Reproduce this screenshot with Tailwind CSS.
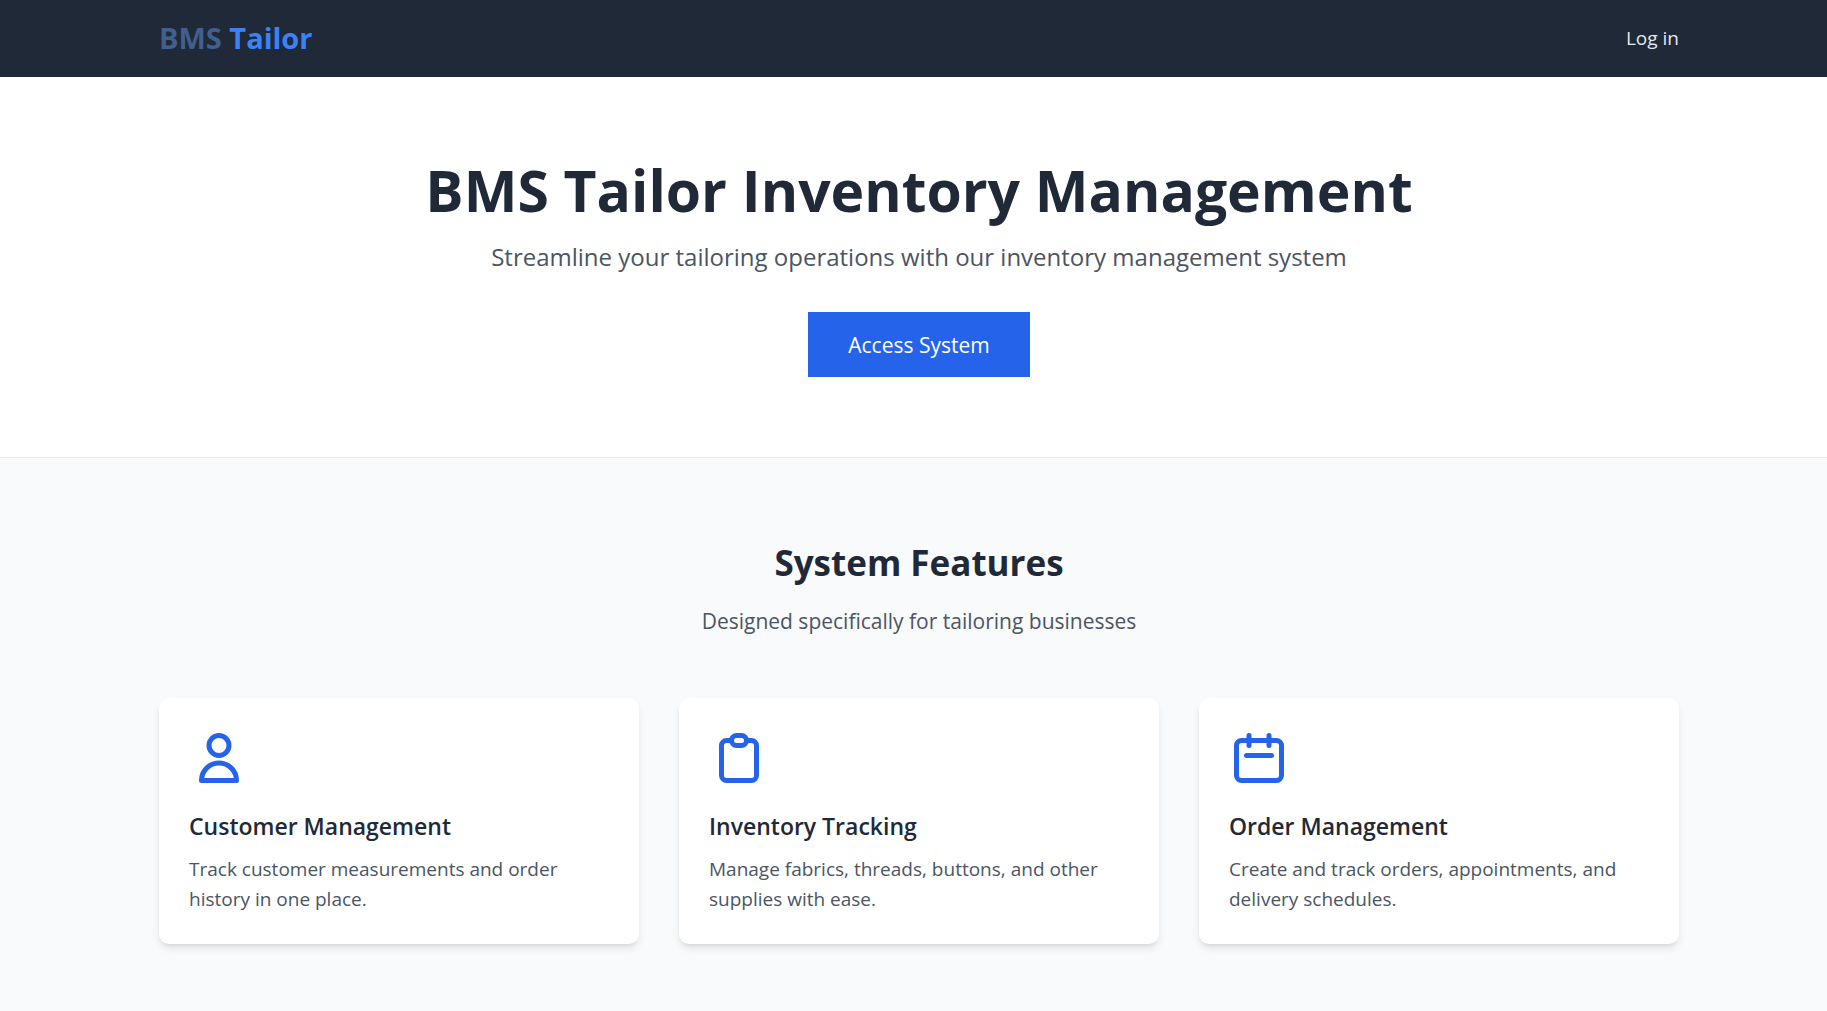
<!DOCTYPE html>
<html lang="en">
<head>
<meta charset="utf-8">
<meta name="viewport" content="width=device-width, initial-scale=1">
<title>BMS Tailor</title>
<script src="https://cdn.jsdelivr.net/npm/@tailwindcss/browser@4"></script>
</head>
<body class="min-h-screen bg-[#f9fafb] font-['Open_Sans','Noto_Sans',sans-serif] text-[#1f2937]">
  <header class="bg-[#1f2937] pl-[11px]">
    <nav class="mx-auto flex h-[77px] max-w-[1600px] items-center justify-between px-10">
      <a href="#" class="pb-0.5 text-[29px] font-bold text-[#3b82f6]"><span class="text-[#415f8f]">BMS</span> Tailor</a>
      <a href="#" class="text-[19px] text-[#e5e7eb]">Log in</a>
    </nav>
  </header>

  <main>
    <section class="border-b border-[#e5e7eb] bg-white pl-[11px]">
      <div class="mx-auto flex max-w-[1600px] flex-col items-center px-10 py-20 text-center">
        <h1 class="text-[57px] leading-[66px] font-bold">BMS Tailor Inventory Management</h1>
        <p class="mt-4 text-[24px] leading-[35px] text-[#4b5563]">Streamline your tailoring operations with our inventory management system</p>
        <button type="button" class="mt-[38px] h-[65px] bg-[#2563eb] px-10 pt-0.5 text-[21px] text-white">Access System</button>
      </div>
    </section>

    <section class="bg-[#f9fafb] pl-[11px]">
      <div class="mx-auto max-w-[1600px] px-10 py-20">
        <div class="text-center">
          <h2 class="text-[35px] leading-[50px] font-bold">System Features</h2>
          <p class="mt-[15px] text-[21px] leading-[36px] text-[#4b5563]">Designed specifically for tailoring businesses</p>
        </div>

        <div class="mt-[59px] grid grid-cols-1 gap-10 md:grid-cols-3">
          <article class="rounded-[10px] bg-white p-7.5 shadow-[0_5px_8px_-1px_rgb(0_0_0/0.1),0_3px_5px_-3px_rgb(0_0_0/0.1)]">
            <svg class="size-15 text-[#2563eb]" viewBox="0 0 24 24" fill="none" stroke="currentColor" stroke-width="2" stroke-linecap="round" stroke-linejoin="round" aria-hidden="true"><path d="M16 7a4 4 0 11-8 0 4 4 0 018 0zM12 14a7 7 0 00-7 7h14a7 7 0 00-7-7z"/></svg>
            <h3 class="mt-[21px] text-[23px] leading-[35px] font-semibold">Customer Management</h3>
            <p class="mt-2.5 text-[19px] leading-[30px] text-[#4b5563]">Track customer measurements and order history in one place.</p>
          </article>

          <article class="rounded-[10px] bg-white p-7.5 shadow-[0_5px_8px_-1px_rgb(0_0_0/0.1),0_3px_5px_-3px_rgb(0_0_0/0.1)]">
            <svg class="size-15 text-[#2563eb]" viewBox="0 0 24 24" fill="none" stroke="currentColor" stroke-width="2" stroke-linecap="round" stroke-linejoin="round" aria-hidden="true"><path d="M9 5H7a2 2 0 00-2 2v12a2 2 0 002 2h10a2 2 0 002-2V7a2 2 0 00-2-2h-2M9 5a2 2 0 002 2h2a2 2 0 002-2M9 5a2 2 0 012-2h2a2 2 0 012 2"/></svg>
            <h3 class="mt-[21px] text-[23px] leading-[35px] font-semibold">Inventory Tracking</h3>
            <p class="mt-2.5 text-[19px] leading-[30px] text-[#4b5563]">Manage fabrics, threads, buttons, and other supplies with ease.</p>
          </article>

          <article class="rounded-[10px] bg-white p-7.5 shadow-[0_5px_8px_-1px_rgb(0_0_0/0.1),0_3px_5px_-3px_rgb(0_0_0/0.1)]">
            <svg class="size-15 text-[#2563eb]" viewBox="0 0 24 24" fill="none" stroke="currentColor" stroke-width="2" stroke-linecap="round" stroke-linejoin="round" aria-hidden="true"><path d="M8 7V3m8 4V3m-9 8h10M5 21h14a2 2 0 002-2V7a2 2 0 00-2-2H5a2 2 0 00-2 2v12a2 2 0 002 2z"/></svg>
            <h3 class="mt-[21px] text-[23px] leading-[35px] font-semibold">Order Management</h3>
            <p class="mt-2.5 text-[19px] leading-[30px] text-[#4b5563]">Create and track orders, appointments, and delivery schedules.</p>
          </article>
        </div>
      </div>
    </section>
  </main>
</body>
</html>
